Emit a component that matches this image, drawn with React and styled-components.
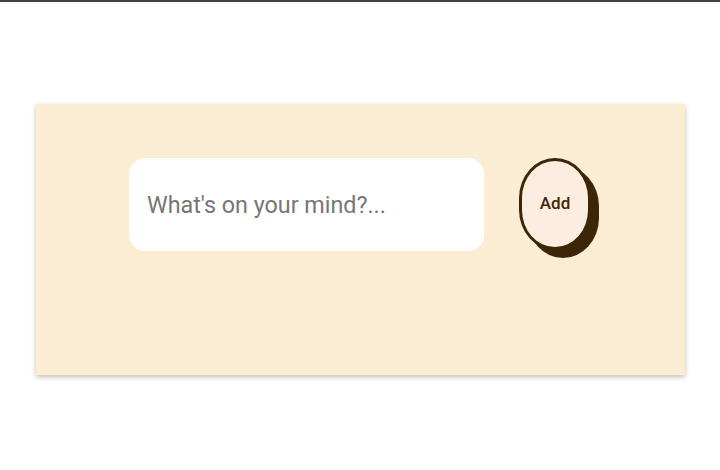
import React from "react";
import styled, { createGlobalStyle } from "styled-components";

const Global = createGlobalStyle`
  html, body { margin: 0; padding: 0; background: #ffffff; }
  body { font-family: Roboto, "Liberation Sans", sans-serif; }
`;

const Page = styled.div`
  width: 720px;
  height: 470px;
  box-sizing: border-box;
  border-top: 2px solid #4a403c;
  padding-top: 102px;
`;

const Card = styled.section`
  width: 649px;
  height: 271px;
  margin: 0 auto;
  box-sizing: border-box;
  background: #fbedd4;
  box-shadow: 0 2px 5px rgba(0, 0, 0, 0.25);
  padding-top: 54px;
  display: flex;
  justify-content: center;
  align-items: flex-start;
  gap: 35px;
`;

const Input = styled.input`
  width: 355px;
  height: 93px;
  box-sizing: border-box;
  border: none;
  outline: none;
  border-radius: 16px;
  background: #ffffff;
  padding: 0 18px;
  font-family: Roboto, "Liberation Sans", sans-serif;
  font-size: 23.3px;
  color: #333;
  &::placeholder { color: #767676; }
`;

const AddButton = styled.button`
  width: 72px;
  height: 92px;
  box-sizing: border-box;
  border: 3px solid #3d2608;
  border-radius: 36px / 40px;
  background: #fdece0;
  box-shadow: 8px 8px 0 #3d2608;
  font-family: Roboto, "Liberation Sans", sans-serif;
  font-weight: 500;
  font-size: 17px;
  line-height: 1;
  padding: 0 0 2px;
  color: #3d2608;
  cursor: pointer;
`;

export default function App() {
  return (
    <>
      <Global />
      <Page>
        <Card>
          <Input placeholder="What's on your mind?..." />
          <AddButton>Add</AddButton>
        </Card>
      </Page>
    </>
  );
}
